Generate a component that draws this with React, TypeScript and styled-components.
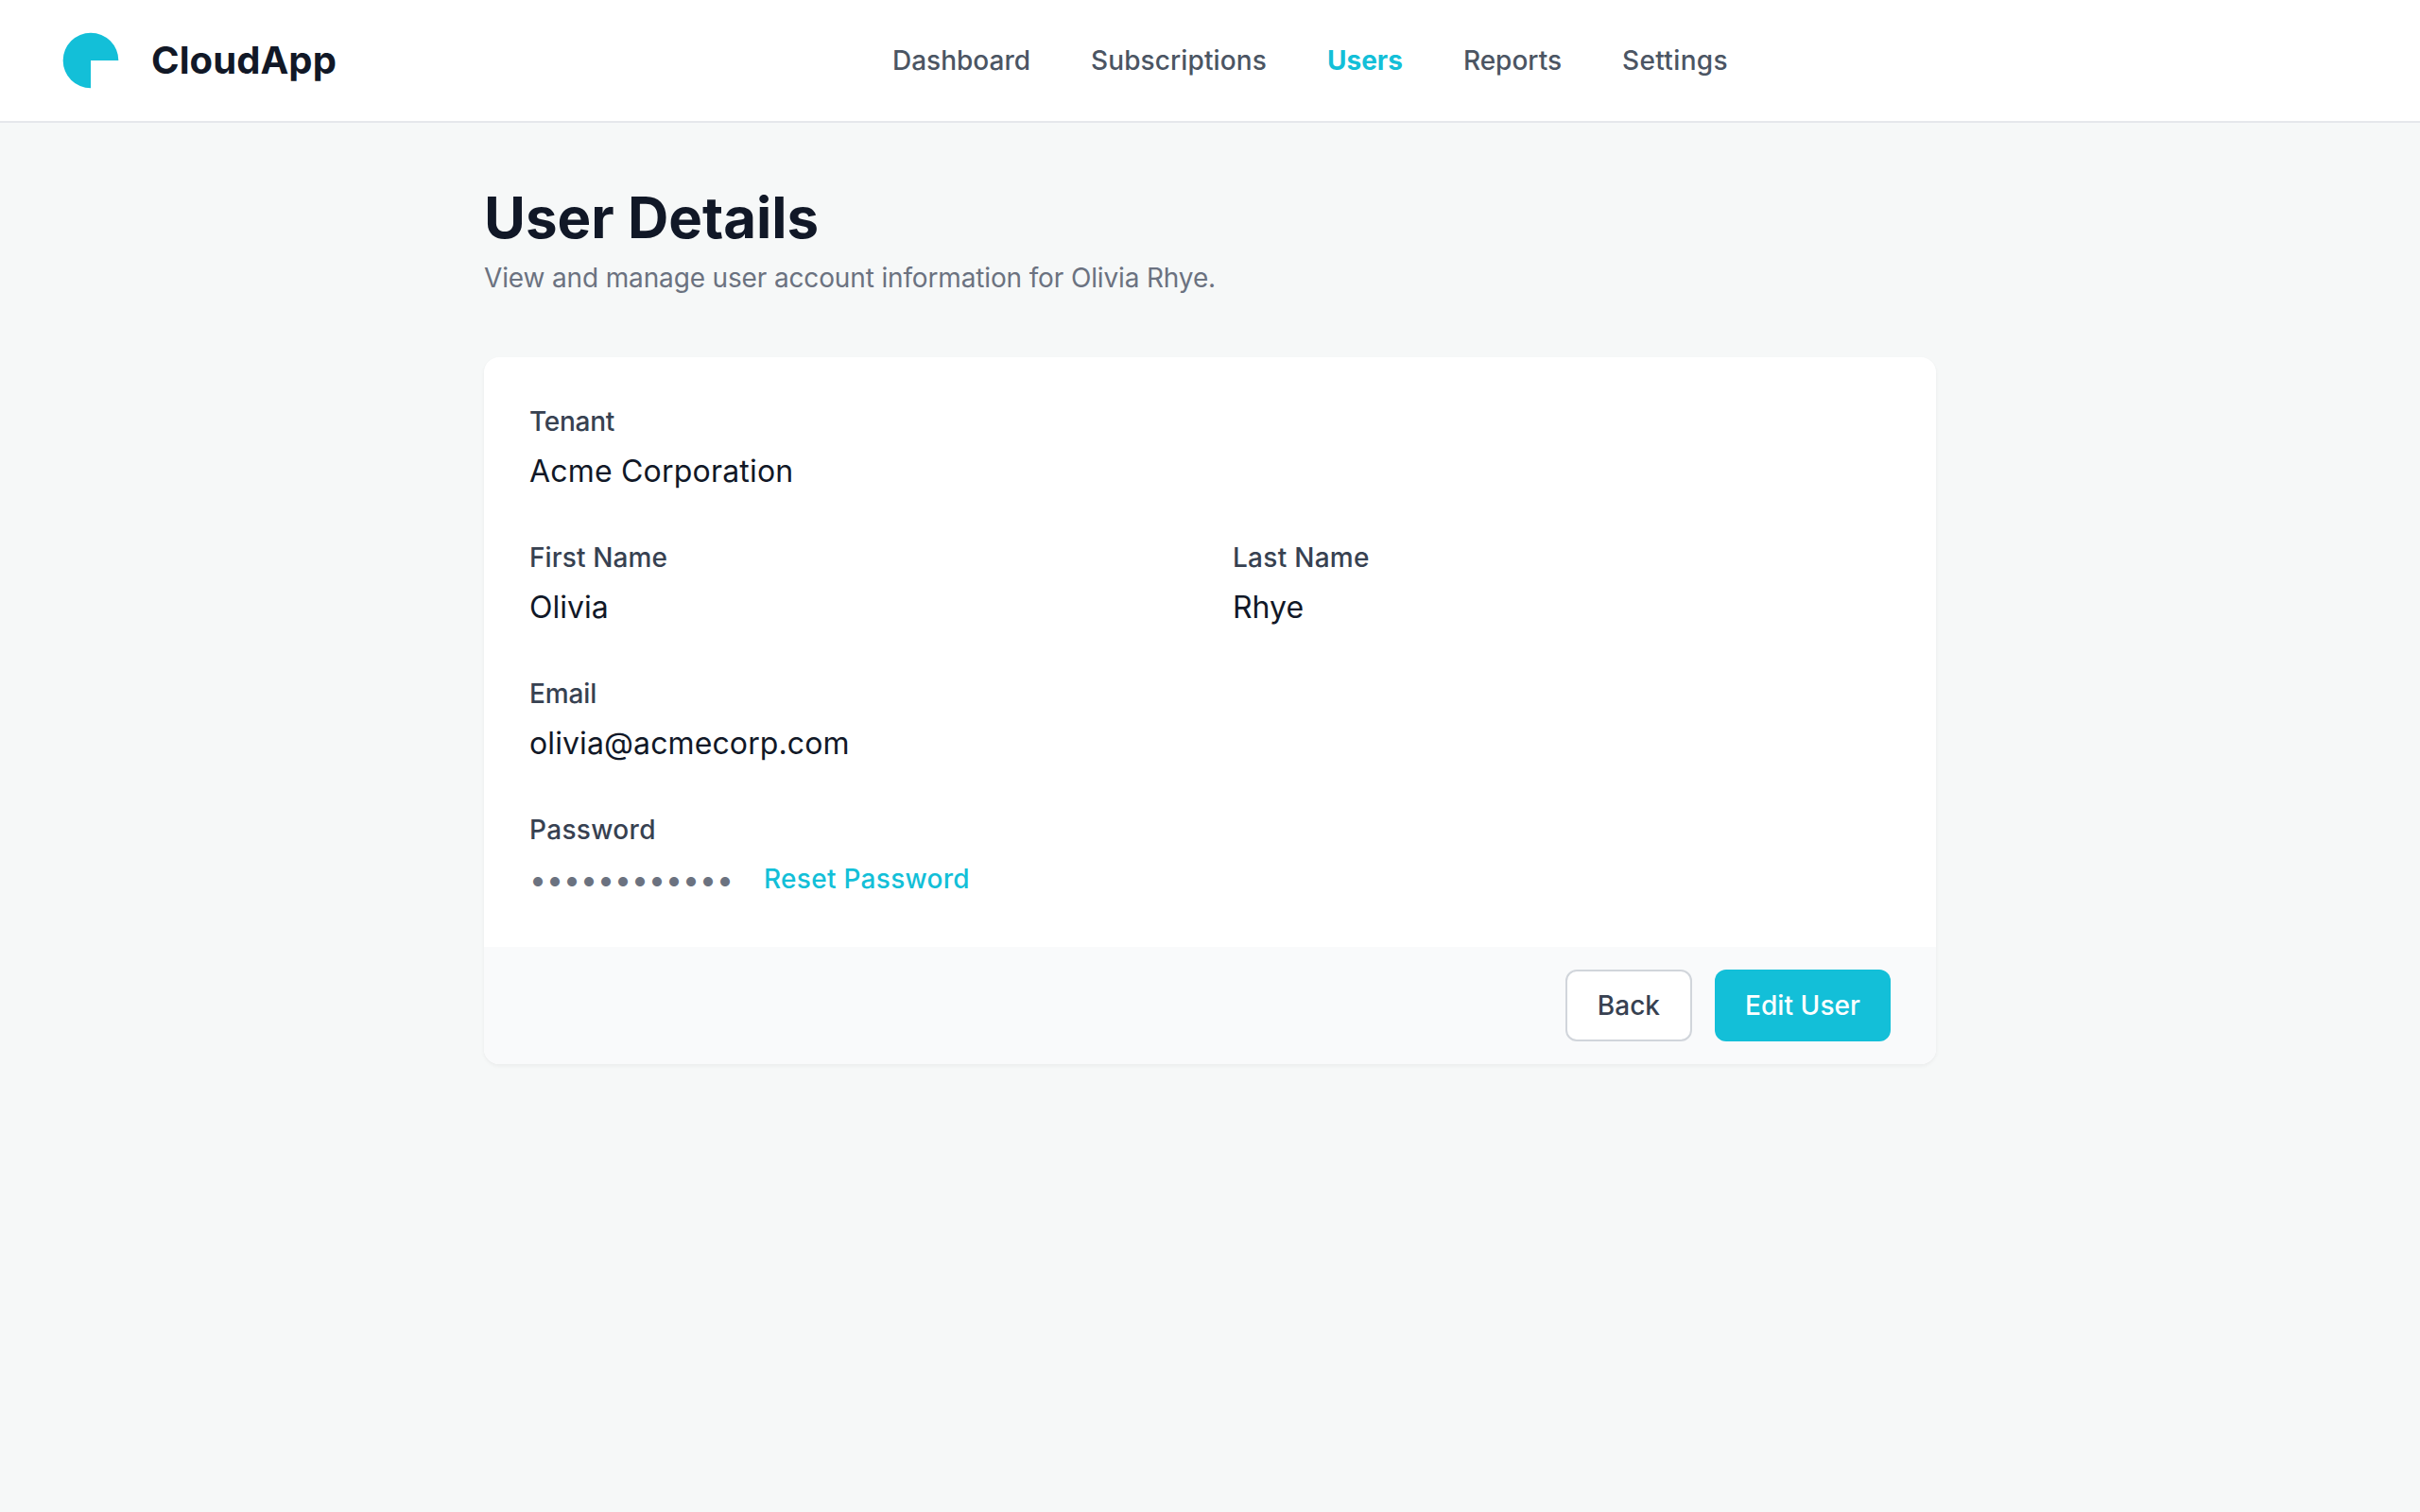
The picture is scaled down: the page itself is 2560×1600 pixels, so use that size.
import React from "react";
import styled, { createGlobalStyle, css } from "styled-components";

const GlobalStyle = createGlobalStyle`
  *, *::before, *::after { box-sizing: border-box; }
  body {
    margin: 0;
    background: #f6f8f8;
    color: #111827;
    font-family: Inter, "Liberation Sans", sans-serif;
    font-size: 32px;
    line-height: 48px;
  }
  h1, h2, p, dl, dt, dd { margin: 0; }
`;

interface Tracked {
  $tracking?: number;
}

const tracking = css<Tracked>`
  letter-spacing: ${(p) => p.$tracking ?? 0}px;
`;

const Page = styled.div`
  display: flex;
  flex-direction: column;
  min-height: 100vh;
`;

const Header = styled.header`
  display: flex;
  align-items: center;
  justify-content: space-between;
  height: 130px;
  padding: 0 64px;
  background: #ffffff;
  border-bottom: 2px solid #e5e7eb;
`;

const Brand = styled.div`
  display: flex;
  align-items: center;
  gap: 32px;
`;

const Logo = styled.svg`
  display: block;
  width: 64px;
  height: 64px;
  color: #13bfd8;
`;

const BrandName = styled.h2`
  font-size: 40px;
  line-height: 56px;
  font-weight: 700;
  letter-spacing: 0.07px;
`;

const Nav = styled.nav`
  display: flex;
  align-items: center;
  gap: 64px;
`;

const NavLink = styled.a<Tracked & { $active?: boolean }>`
  font-size: 28px;
  line-height: 40px;
  font-weight: ${(p) => (p.$active ? 700 : 500)};
  color: ${(p) => (p.$active ? "#13bfd8" : "#4b5563")};
  ${tracking}
`;

const HeaderEnd = styled.div`
  width: 80px;
`;

const Main = styled.main`
  width: 1536px;
  margin: 0 auto;
  padding: 64px 0;
`;

const Title = styled.h1`
  font-size: 60px;
  line-height: 72px;
  font-weight: 700;
`;

const Subtitle = styled.p`
  margin-top: 8px;
  font-size: 28px;
  line-height: 40px;
  letter-spacing: -0.144px;
  color: #6b7280;
`;

const Card = styled.section`
  margin-top: 64px;
  overflow: hidden;
  background: #ffffff;
  border-radius: 16px;
  box-shadow: 0 2px 4px 0 rgba(0, 0, 0, 0.05);
`;

const Fields = styled.dl`
  display: grid;
  grid-template-columns: 1fr 1fr;
  gap: 48px;
  padding: 48px;
`;

const Field = styled.div<{ $wide?: boolean }>`
  grid-column: ${(p) => (p.$wide ? "1 / -1" : "auto")};
`;

const Label = styled.dt<Tracked>`
  font-size: 28px;
  line-height: 40px;
  font-weight: 500;
  color: #374151;
  ${tracking}
`;

const Value = styled.dd`
  display: flex;
  align-items: center;
  gap: 32px;
  height: 48px;
  margin-top: 8px;
`;

const ValueText = styled.span<Tracked & { $muted?: boolean }>`
  padding-top: 2px;
  color: ${(p) => (p.$muted ? "#6b7280" : "#111827")};
  ${tracking}
`;

const ResetLink = styled.a`
  font-size: 28px;
  line-height: 40px;
  font-weight: 500;
  letter-spacing: 0.29px;
  color: #13bfd8;
`;

const Footer = styled.footer`
  display: flex;
  justify-content: flex-end;
  gap: 24px;
  padding: 24px 48px;
  background: #f9fafb;
`;

const Button = styled.button<Tracked & { $primary?: boolean }>`
  padding: 16px 32px;
  border: 2px solid #d1d5db;
  border-radius: 12px;
  background: #ffffff;
  color: #374151;
  font-family: inherit;
  font-size: 28px;
  line-height: 40px;
  font-weight: 500;
  ${tracking}
  ${(p) =>
    p.$primary &&
    css`
      border: 0;
      background: #13bfd8;
      color: #ffffff;
    `}
`;

const links = [
  { name: "Dashboard", tracking: 0 },
  { name: "Subscriptions", tracking: 0.115 },
  { name: "Users", tracking: 0, active: true },
  { name: "Reports", tracking: 0 },
  { name: "Settings", tracking: 0.35 },
];

const fields = [
  { label: "Tenant", labelTracking: -0.28, value: "Acme Corporation", valueTracking: 0.2, wide: true },
  { label: "First Name", labelTracking: 0.12, value: "Olivia", valueTracking: 0 },
  { label: "Last Name", labelTracking: 0.28, value: "Rhye", valueTracking: 0 },
  { label: "Email", labelTracking: -0.12, value: "olivia@acmecorp.com", valueTracking: 0.11, wide: true },
];

export default function App() {
  return (
    <Page>
      <GlobalStyle />
      <Header>
        <Brand>
          <Logo viewBox="0 0 48 48" fill="currentColor" aria-hidden="true">
            <path d="M24 24H46A22 22 0 1 0 24 46Z" />
          </Logo>
          <BrandName>CloudApp</BrandName>
        </Brand>
        <Nav>
          {links.map((l) => (
            <NavLink key={l.name} $active={l.active} $tracking={l.tracking}>
              {l.name}
            </NavLink>
          ))}
        </Nav>
        <HeaderEnd />
      </Header>
      <Main>
        <Title>User Details</Title>
        <Subtitle>View and manage user account information for Olivia Rhye.</Subtitle>
        <Card>
          <Fields>
            {fields.map((f) => (
              <Field key={f.label} $wide={f.wide}>
                <Label $tracking={f.labelTracking}>{f.label}</Label>
                <Value>
                  <ValueText $tracking={f.valueTracking}>{f.value}</ValueText>
                </Value>
              </Field>
            ))}
            <Field $wide>
              <Label $tracking={0.34}>Password</Label>
              <Value>
                <ValueText $muted>{"•".repeat(12)}</ValueText>
                <ResetLink>Reset Password</ResetLink>
              </Value>
            </Field>
          </Fields>
          <Footer>
            <Button>Back</Button>
            <Button $primary $tracking={0.08}>
              Edit User
            </Button>
          </Footer>
        </Card>
      </Main>
    </Page>
  );
}
